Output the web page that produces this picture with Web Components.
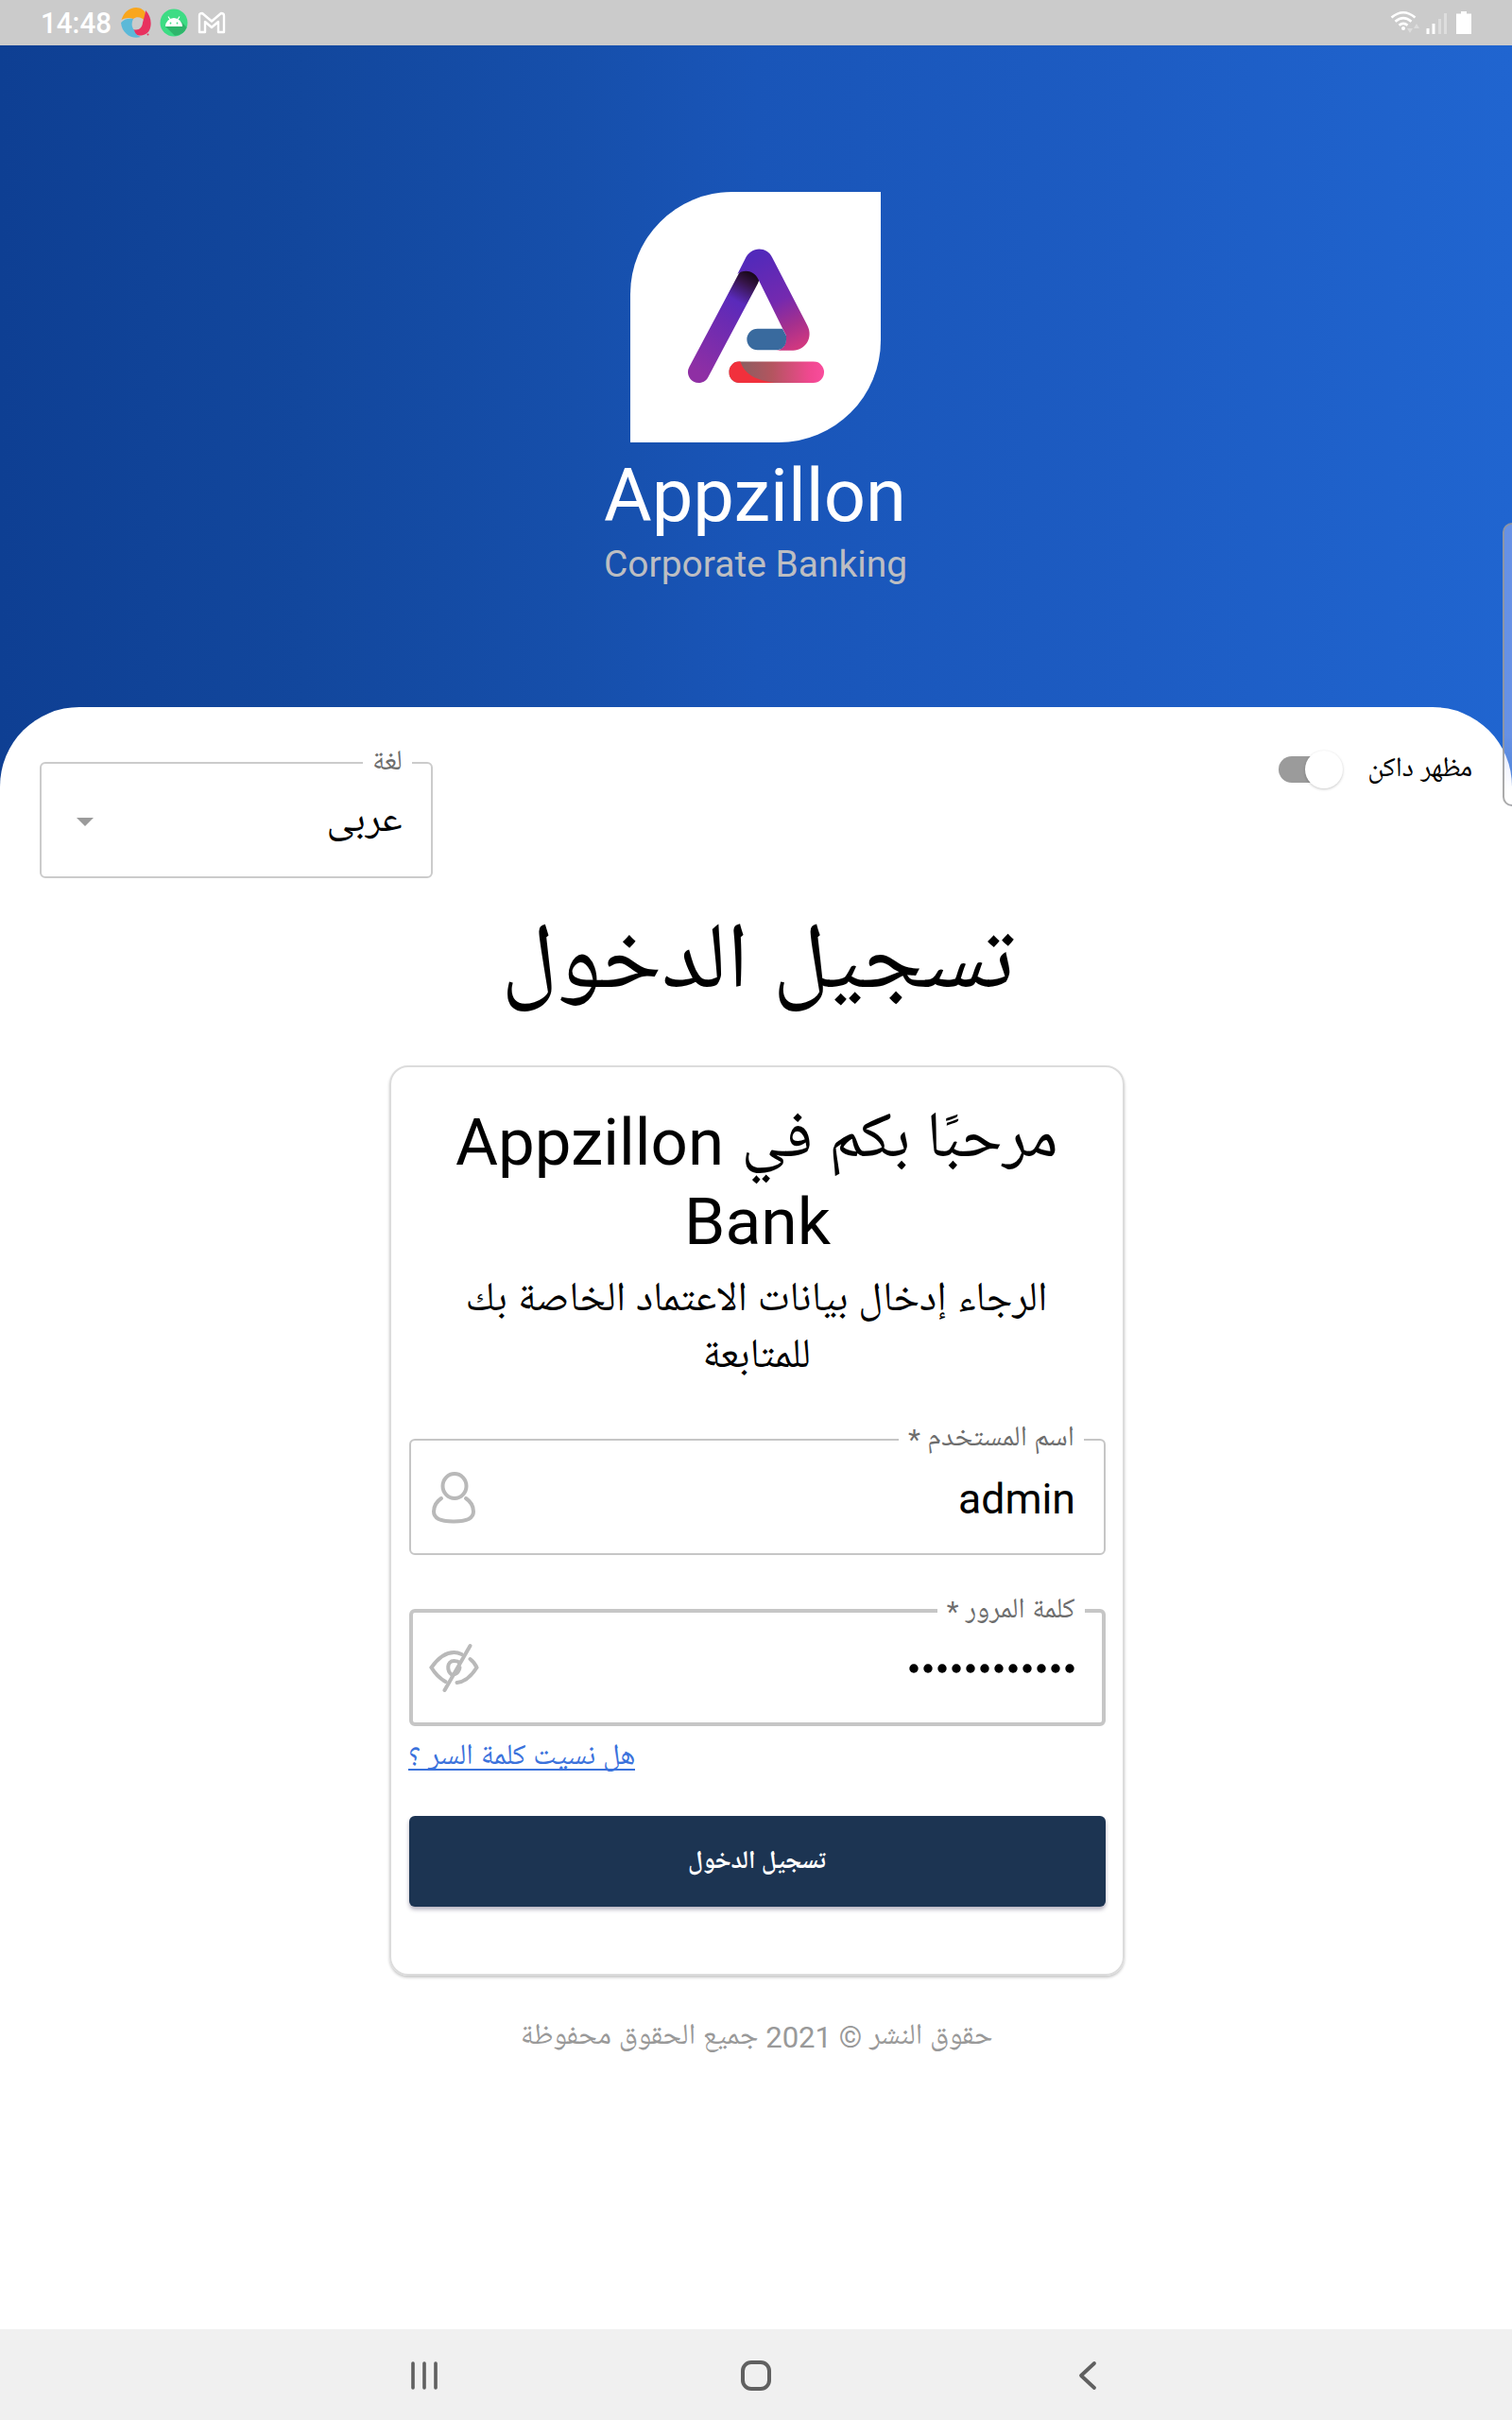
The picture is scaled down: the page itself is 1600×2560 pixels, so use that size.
<!DOCTYPE html>
<html lang="ar">
<head>
<meta charset="utf-8">
<title>Appzillon</title>
<style>
html,body{margin:0;padding:0;background:#fff}
body{width:1600px;height:2560px;overflow:hidden;font-family:Roboto,"Noto Naskh Arabic UI","Noto Naskh Arabic","Noto Sans Arabic UI","Noto Sans Arabic","DejaVu Sans",sans-serif;color:#000}
</style>
</head>
<body>
<banking-app></banking-app>
<script>
const define = (name, html, setup) => customElements.define(name, class extends HTMLElement {
  connectedCallback() {
    if (this.shadowRoot) return;
    this.attachShadow({ mode: 'open' }).innerHTML = html;
    if (setup) setup.call(this, this.shadowRoot);
  }
});

/* One line of text set to an exact measure: w = width, size = font size, lh = line height */
define('fit-text', `<style>
:host{display:block;flex:none;white-space:nowrap}
span{display:inline-block;transform-origin:0 50%}
</style><span><slot></slot></span>`, function (root) {
  const size = this.getAttribute('size'), w = +this.getAttribute('w'), lh = this.getAttribute('lh');
  this.style.fontSize = size + 'px';
  this.style.lineHeight = lh + 'px';
  this.style.height = lh + 'px';
  this.style.width = w + 'px';
  const s = root.querySelector('span');
  if (this.dir === 'rtl') s.style.transformOrigin = '100% 50%';
  const fit = () => { s.style.transform = 'none'; s.style.transform = `scaleX(${w / s.getBoundingClientRect().width})`; };
  fit();
  document.fonts.ready.then(fit);
});

define('status-bar', `<style>
:host{display:flex;height:48px;background:#cbcbcb;color:#fff;align-items:center;justify-content:space-between;padding:0 43px 0 43px;box-sizing:border-box;font-weight:500}
.l{display:flex;align-items:center}
svg{display:block}
</style>
<div class="l"><fit-text size="31" w="75" lh="49">14:48</fit-text>
<svg style="margin-left:10px" width="32" height="32" viewBox="0 0 32 32">
<path d="M0.500 13C3 5 9 0 16 0C21 0 25 3 26 6L26.500 15C22 10 17 9 13 12C9 10 4 11 0.500 13Z" fill="#f9a61c"/>
<path d="M26 3C32 9 33 18 30 24C28 28 24 29.500 20 29.500C16 29.500 13.500 27 13 23C19 25 22.500 21 23 16C24 11 26 7 26 3Z" fill="#e8315f"/>
<path d="M0 16C3 12 8 11 13 12C11 16 11 20 14 24C15 28 18 30 21 31C12 34 1 28 0 16Z" fill="#5bb9d8"/>
<path d="M14 13Q18 11 21.500 14Q21.500 19 18.500 21Q15 22 14 20Q12 16 14 13Z" fill="#cbcbcb"/>
<circle cx="28.500" cy="28.500" r="1" fill="#e8315f"/></svg>
<svg style="margin-left:9px" width="30" height="30" viewBox="0 0 30 30"><circle cx="15" cy="15" r="14.500" fill="#3ddc84"/><path d="M6 19L16 28.800A14.500 14.500 0 0 0 28.600 20L23 14Z" fill="#2fb56b"/><path d="M6 19a9 9 0 0 1 18 0Z" fill="#fff"/><path d="M9 8.500l2.500 4M21 8.500l-2.500 4" stroke="#fff" stroke-width="1.200"/><circle cx="11.500" cy="15.500" r=".9" fill="#3ddc84"/><circle cx="18.500" cy="15.500" r=".9" fill="#3ddc84"/></svg>
<svg style="margin-left:10px" width="30" height="24" viewBox="0 0 30 24"><path d="M2 4.500Q2 2 5 2L15 10.500L25 2Q28 2 28 4.500V22H22V11L15 17L8 11V22H2Z" fill="none" stroke="#fff" stroke-width="2.400" stroke-linejoin="round"/></svg>
</div>
<svg width="90" height="48" viewBox="0 0 90 48"><g fill="none" stroke="#fff" stroke-width="2.600"><path d="M5.500 18.500Q18 8 30.500 18.500"/><path d="M9.500 22.800Q18 15.500 26.500 22.800"/><path d="M13.500 26.800Q18 23 22.500 26.800"/></g><circle cx="18" cy="30" r="2" fill="#fff"/><path d="M22 30h6l-3 5zM29 30h6l-3-5z" fill="#fff" opacity=".35"/><path d="M42.500 30h3v6h-3zM48.500 25h3v11h-3z" fill="#fff"/><path d="M55 20h3v16h-3zM61 14h3v22h-3z" fill="#fff" opacity=".35"/><path d="M79 12h6v2.500h5V36H74V14.500h5z" fill="#fff"/></svg>`);

define('brand-logo', `<style>
:host{display:flex;width:265px;height:265px;background:#fff;border-radius:108px 0 108px 0;align-items:center;justify-content:center;box-sizing:border-box;padding:0 0 11px 1px;margin-right:1px}
svg{display:block}
</style><svg width="200" height="180" viewBox="0 0 600 540">
<defs>
<linearGradient id="a" gradientUnits="userSpaceOnUse" x1="292" y1="150" x2="118" y2="462"><stop offset="0" stop-color="#180818"/><stop offset=".1" stop-color="#351447"/><stop offset=".28" stop-color="#5a2abb"/><stop offset=".5" stop-color="#6c2bb2"/><stop offset="1" stop-color="#8f2fa4"/></linearGradient>
<linearGradient id="b" gradientUnits="userSpaceOnUse" x1="300" y1="90" x2="440" y2="380"><stop offset="0" stop-color="#5229ba"/><stop offset=".5" stop-color="#7429af"/><stop offset=".78" stop-color="#a6308d"/><stop offset="1" stop-color="#d13880"/></linearGradient>
<linearGradient id="c" x1="0" x2="1"><stop offset=".15" stop-color="#8f5d60"/><stop offset=".45" stop-color="#b3555f"/><stop offset=".85" stop-color="#f04890"/><stop offset="1" stop-color="#f94c9c"/></linearGradient>
<clipPath id="p"><rect x="214" y="427" width="302" height="68" rx="34"/></clipPath>
</defs>
<path d="M118 461L276 163" stroke="url(#a)" stroke-width="68" stroke-linecap="round"/>
<path d="M241 150L265 103C283 61 334 61 352 98L463 313C483 351 457 392 418 392H365Q392 390 396 358V346L308 168C294 136 260 134 241 150Z" fill="url(#b)"/>
<path d="M305 323H384L396 346V358C396 377 383 391 365 391H305A34 34 0 0 1 305 323Z" fill="#396a9e"/>
<g clip-path="url(#p)"><rect x="214" y="427" width="302" height="68" fill="url(#c)"/><path d="M214 427H250C265 470 300 487 360 495H214Z" fill="#f1303c"/></g>
</svg>`);

define('brand-header', `<style>
:host{display:flex;flex-direction:column;align-items:center;height:812px;box-sizing:border-box;padding-top:155px;background:linear-gradient(90deg,#0e3f93 0,#12479d 20%,#164fab 38%,#1955b8 50%,#1d5cc3 75%,#2065d0 100%)}
.n{margin-top:10px;color:#fff;margin-right:2px}
.s{color:#bdbec2;margin-top:4px;margin-right:2px}
</style><brand-logo></brand-logo>
<fit-text class="n" size="78.500" w="320" lh="92">Appzillon</fit-text>
<fit-text class="s" size="38.800" w="321" lh="46">Corporate Banking</fit-text>`);

/* Outlined box whose caption interrupts the top edge */
define('outlined-field', `<style>
:host{display:block;box-sizing:border-box}
fieldset{margin:0;min-width:0;width:100%;height:100%;box-sizing:border-box;border:var(--bw,2px) solid var(--bc,#c6c6c6);border-radius:6px;padding:0 var(--lx,21px)}
legend{padding:0 10px;height:var(--bw,2px);color:#6d6d6d;display:flex;align-items:center}
.row{display:flex;direction:rtl;align-items:center;justify-content:space-between;height:calc(100% - var(--bw,2px));padding:3px 10px 0 0;box-sizing:border-box}
</style><fieldset dir="rtl"><legend><slot name="label"></slot></legend><div class="row"><slot></slot></div></fieldset>`);

define('dark-switch', `<style>
:host{display:flex;align-items:center;width:69px;height:42px;margin-bottom:3px}
i{display:block;width:58px;height:28px;border-radius:14px;background:#9b9b9b}
b{display:block;width:40px;height:40px;border-radius:50%;background:#fff;box-shadow:0 1px 3px rgba(0,0,0,.22);margin-left:-30px}
</style><i></i><b></b>`);

define('login-card', `<style>
:host{display:flex;flex-direction:column;align-items:center;width:778px;height:963px;box-sizing:border-box;border:2px solid #dcdcdc;border-radius:20px;padding:38px 18px 0;box-shadow:0 2px 3px rgba(0,0,0,.22)}
.h{display:flex;align-items:center;gap:19px;height:84px;direction:ltr}
.s1{margin-top:13px}
.u{width:737px;height:123px;margin-top:54px}
.p{width:737px;height:124px;margin-top:57px;--bw:4px;--lx:18px}
a{align-self:flex-start;color:#3b72dc;margin-top:13px;border-bottom:2px solid #3b72dc;height:32px;text-decoration:none}
button{all:unset;display:flex;align-items:center;justify-content:center;width:737px;height:96px;border-radius:6px;background:#1c3452;color:#fff;margin-top:48px;box-shadow:0 3px 4px rgba(40,30,70,.35);font-weight:700}
svg{display:block}
.v{padding-top:4px}
.ui{margin-left:-1px}.ei{margin-left:-7px}
.bt{padding-top:4px}
</style>
<div class="h"><fit-text size="69" w="284" lh="84">Appzillon</fit-text><fit-text dir="rtl" size="69" w="335" lh="80">مرحبًا بكم في</fit-text></div>
<fit-text size="69" w="155" lh="84">Bank</fit-text>
<fit-text class="s1" dir="rtl" size="43.600" w="616" lh="60">الرجاء إدخال بيانات الاعتماد الخاصة بك</fit-text>
<fit-text dir="rtl" size="43.600" w="115" lh="60">للمتابعة</fit-text>
<outlined-field class="u"><fit-text slot="label" dir="rtl" size="30" w="176" lh="40">اسم المستخدم *</fit-text>
<fit-text class="v" size="44" w="124" lh="60">admin</fit-text>
<svg class="ui" width="48" height="56" viewBox="0 0 48 56" fill="none" stroke="#b9b9b9" stroke-width="4"><ellipse cx="26" cy="16" rx="12.500" ry="13"/><path d="M13 29C7 33 5 38 5 43C5 50 12 53.500 26 53.500S47 50 47 43C47 38 45 33 39 29" stroke-linecap="round" transform="translate(-1)"/></svg></outlined-field>
<outlined-field class="p"><fit-text slot="label" dir="rtl" size="30" w="136" lh="41">كلمة المرور *</fit-text>
<svg style="margin-top:1px" width="176" height="12" viewBox="0 0 176 12" role="img" fill="#000"><g id="d"></g></svg>
<svg class="ei" width="60" height="54" viewBox="-3 0 60 54" fill="none" stroke="#b9b9b9" stroke-width="4" stroke-linecap="round"><g transform="translate(3.5)"><path d="M17 42C10 38 5 32 2 27C9 17 17 11 26 11Q30 11 34 13"/><path d="M43 18Q48 22 50 27C45 35 38 42 29 43"/><path d="M24 35C18 31 18 20 26 20Q30 20 32 22M32 27Q31 32 27 34"/><path d="M43 4L16 51"/></g></svg></outlined-field>
<a><fit-text dir="rtl" size="31" w="240" lh="41">هل نسيت كلمة السر ؟</fit-text></a>
<button><fit-text class="bt" dir="rtl" size="27" w="146" lh="40">تسجيل الدخول</fit-text></button>`, root => {
  root.getElementById('d').innerHTML = Array.from({ length: 12 }, (_, i) => `<circle cx="${5 + i * 15}" cy="7" r="4.7"/>`).join('');
});

define('login-sheet', `<style>
:host{display:flex;flex-direction:column;align-items:center;box-sizing:border-box;height:1716px;margin-top:-112px;background:#fff;border-radius:84px 84px 0 0;padding:45px 42px 0 42px}
.top{display:flex;align-self:stretch;justify-content:space-between;align-items:flex-start}
.lang{width:416px;height:123px;margin-top:13px;--bc:#cbcbcb;--lx:20px}
.lv{padding-top:5px}
.dark{display:flex;align-items:center;gap:25px}
.t{margin:24px 0 0 3px}
.f{color:#999;margin-top:40px;margin-left:1px}
login-card{margin-top:34px;margin-left:2px}
svg{display:block;margin-left:17px;margin-top:3px}
</style>
<div class="top"><outlined-field class="lang"><fit-text slot="label" dir="rtl" size="30" w="32" lh="41">لغة</fit-text><fit-text class="lv" dir="rtl" size="42" w="80" lh="60">عربى</fit-text><svg width="18" height="9" viewBox="0 0 18 9"><path d="M0 0h18L9 9z" fill="#9b9b9b"/></svg></outlined-field>
<div class="dark"><dark-switch></dark-switch><fit-text dir="rtl" size="29.500" w="111" lh="45">مظهر داكن</fit-text></div></div>
<fit-text class="t" dir="rtl" size="99" w="543" lh="140">تسجيل الدخول</fit-text>
<login-card></login-card>
<fit-text class="f" dir="rtl" size="31" w="500" lh="52">حقوق النشر © 2021 جميع الحقوق محفوظة</fit-text>`);

define('nav-bar', `<style>
:host{display:flex;height:96px;background:#f0f0f0;align-items:center;justify-content:space-between;padding:1px 438px 0 433px;box-sizing:border-box}
svg{display:block}
.c{margin-right:5px}
</style>
<svg width="32" height="34" viewBox="0 0 32 34" stroke="#606060" stroke-width="3.600" stroke-linecap="round"><path d="M4 4V30M16 4V30M28 4V30"/></svg>
<svg class="c" width="32" height="34" viewBox="0 0 32 34" fill="none" stroke="#606060" stroke-width="4"><rect x="2" y="3" width="28" height="28" rx="9"/></svg>
<svg width="22" height="34" viewBox="0 0 22 34" fill="none" stroke="#606060" stroke-width="3.800" stroke-linecap="round" stroke-linejoin="round"><path d="M18 4L4 17L18 30"/></svg>`);

define('banking-app', `<style>
:host{display:block;position:relative;width:1600px;height:2560px;overflow:hidden}
.edge{position:absolute;left:1590px;top:553px;width:20px;height:300px;box-sizing:border-box;border:2px solid rgba(150,150,150,.8);border-radius:10px;background:linear-gradient(rgba(190,200,255,.45) 75%,rgba(255,255,255,.2) 95%)}
</style><status-bar></status-bar><brand-header></brand-header><login-sheet></login-sheet><nav-bar></nav-bar><div class="edge"></div>`);
</script>
</body>
</html>
